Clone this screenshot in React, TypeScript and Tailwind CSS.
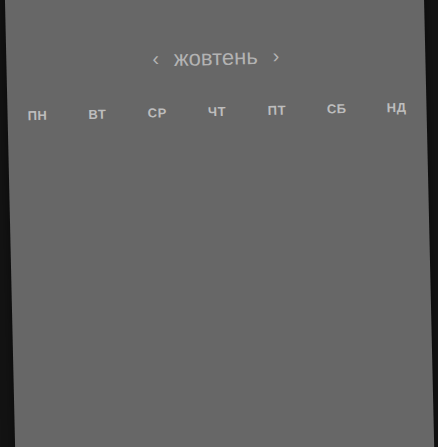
const days = ["пн", "вт", "ср", "чт", "пт", "сб", "нд"];

export default function App() {
  return (
    <div className="w-[438px] h-[447px] bg-[#131313] overflow-hidden flex justify-center font-['Liberation_Sans',Arial,sans-serif]">
      {/* Tilted calendar card */}
      <div className="w-[419px] h-[480px] shrink-0 -mt-[20px] bg-[#676767] -rotate-[1.3deg] shadow-[0_0_12px_rgba(0,0,0,0.5)] pt-[66px]">
        <div className="flex items-center justify-center gap-[15px] text-[#b3b3b3]">
          <button className="text-[20px] leading-none pb-[3px]">‹</button>
          <span className="text-[22px] leading-6">жовтень</span>
          <button className="text-[20px] leading-none pb-[3px]">›</button>
        </div>

        <div className="grid grid-cols-7 mt-[32px]">
          {days.map((d) => (
            <div
              key={d}
              className="text-center text-[13px] font-bold uppercase tracking-[0.5px] text-[#bdbdbd]"
            >
              {d}
            </div>
          ))}
        </div>
      </div>
    </div>
  );
}
